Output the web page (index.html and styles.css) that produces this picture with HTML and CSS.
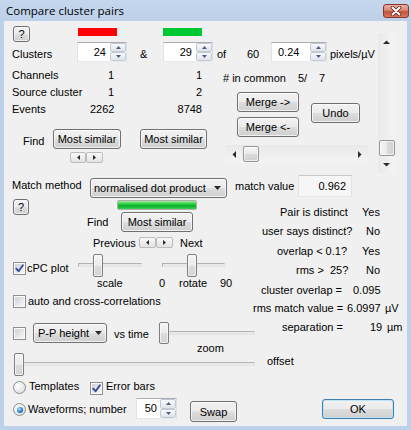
FILE: index.html
```html
<!DOCTYPE html>
<html>
<head>
<meta charset="utf-8">
<title>Compare cluster pairs</title>
<link rel="stylesheet" href="styles.css">
</head>
<body>
<div class="window">
  <div class="titlebar">
    <span class="title">Compare cluster pairs</span>
    <span class="close"><svg width="14" height="10" viewBox="0 0 14 10"><path d="M3.5 1.5L10.5 8.5M10.5 1.5L3.5 8.5" stroke="#6e2a20" stroke-width="3.6" stroke-linecap="round"/><path d="M3.5 1.5L10.5 8.5M10.5 1.5L3.5 8.5" stroke="#ffffff" stroke-width="1.9" stroke-linecap="round"/></svg></span>
  </div>
  <div class="client">
    <div class="top">
      <div class="top-main">
        <div class="row-a">
          <div class="btn help">?</div>
          <div class="bar bar-red"></div>
          <div class="bar bar-green"></div>
        </div>
        <div class="row-b">
          <span class="lbl lbl-clusters">Clusters</span>
          <div class="spin spin-cl"><span class="spin-val">24</span><span class="spin-btns"><span class="sb"><svg class="stri" width="5" height="3" viewBox="0 0 5 3"><path d="M0 3L2.5 0L5 3Z"/></svg></span><span class="sb"><svg class="stri" width="5" height="3" viewBox="0 0 5 3"><path d="M0 0L2.5 3L5 0Z"/></svg></span></span></div>
          <span class="lbl lbl-amp">&amp;</span>
          <div class="spin spin-cl"><span class="spin-val">29</span><span class="spin-btns"><span class="sb"><svg class="stri" width="5" height="3" viewBox="0 0 5 3"><path d="M0 3L2.5 0L5 3Z"/></svg></span><span class="sb"><svg class="stri" width="5" height="3" viewBox="0 0 5 3"><path d="M0 0L2.5 3L5 0Z"/></svg></span></span></div>
          <span class="lbl lbl-of">of</span>
          <span class="lbl lbl-n">60</span>
          <div class="spin spin-px"><span class="spin-val">0.24</span><span class="spin-btns"><span class="sb"><svg class="stri" width="5" height="3" viewBox="0 0 5 3"><path d="M0 3L2.5 0L5 3Z"/></svg></span><span class="sb"><svg class="stri" width="5" height="3" viewBox="0 0 5 3"><path d="M0 0L2.5 3L5 0Z"/></svg></span></span></div>
          <span class="lbl lbl-unit">pixels/µV</span>
        </div>
        <div class="lower">
          <div class="info-col">
            <div class="info-rows">
              <div class="info-row"><span>Channels</span><span class="iv">1</span><span class="iv">1</span></div>
              <div class="info-row"><span>Source cluster</span><span class="iv">1</span><span class="iv">2</span></div>
              <div class="info-row"><span>Events</span><span class="iv">2262</span><span class="iv">8748</span></div>
            </div>
            <div class="find-row">
              <span class="lbl lbl-find">Find</span>
              <div class="btn most-a">Most similar</div>
              <div class="btn most-b">Most similar</div>
            </div>
            <div class="arrows arrows-find">
              <span class="abtn abtn-l"><svg class="tri" width="3" height="5" viewBox="0 0 3 5"><path d="M3 0L0 2.5L3 5Z"/></svg></span>
              <span class="abtn"><svg class="tri" width="3" height="5" viewBox="0 0 3 5"><path d="M0 0L3 2.5L0 5Z"/></svg></span>
            </div>
          </div>
          <div class="merge-col">
            <div class="common"><span class="common-lbl"># in common</span><span class="common-a">5/</span><span>7</span></div>
            <div class="merge-row">
              <div class="merge-stack">
                <div class="btn merge">Merge -&gt;</div>
                <div class="btn merge">Merge &lt;-</div>
              </div>
              <div class="btn undo">Undo</div>
            </div>
            <div class="hscroll">
              <span class="sarrow-h"><svg class="tri" width="4" height="7" viewBox="0 0 4 7"><path d="M4 0L0.5 3.5L4 7Z"/></svg></span>
              <span class="htrack"><span class="hthumb"></span></span>
              <span class="sarrow-h"><svg class="tri" width="4" height="7" viewBox="0 0 4 7"><path d="M0 0L3.5 3.5L0 7Z"/></svg></span>
            </div>
          </div>
        </div>
      </div>
      <div class="vscroll">
        <span class="sarrow-v"><svg class="tri" width="7" height="4" viewBox="0 0 7 4"><path d="M0 4L3.5 0.5L7 4Z"/></svg></span>
        <span class="vtrack"><span class="vthumb"></span></span>
        <span class="sarrow-v"><svg class="tri" width="7" height="4" viewBox="0 0 7 4"><path d="M0 0L3.5 3.5L7 0Z"/></svg></span>
      </div>
    </div>

    <div class="match-row">
      <span class="lbl lbl-method">Match method</span>
      <div class="combo combo-method"><span>normalised dot product</span><svg class="tri" width="7" height="4" viewBox="0 0 7 4"><path d="M0 0L3.5 4L7 0Z"/></svg></div>
      <span class="lbl lbl-mv">match value</span>
      <div class="valbox">0.962</div>
    </div>

    <div class="mid">
      <div class="mid-left">
        <div class="find2-block">
          <div class="btn help help2">?</div>
          <div class="find2-col">
            <div class="progress"><div class="progress-fill"></div></div>
            <div class="find2-row">
              <span class="lbl lbl-find2">Find</span>
              <div class="btn most-c">Most similar</div>
            </div>
          </div>
        </div>
        <div class="prev-row">
          <span class="lbl lbl-prev">Previous</span>
          <div class="arrows arrows-prev">
            <span class="abtn"><svg class="tri" width="3" height="5" viewBox="0 0 3 5"><path d="M3 0L0 2.5L3 5Z"/></svg></span>
            <span class="abtn"><svg class="tri" width="3" height="5" viewBox="0 0 3 5"><path d="M0 0L3 2.5L0 5Z"/></svg></span>
          </div>
          <span class="lbl lbl-next">Next</span>
        </div>
        <div class="cpc-row">
          <div class="check-group">
            <span class="cb cb-cpc"><svg class="tick" width="9" height="9" viewBox="0 0 9 9"><path d="M1.2 4.6L3.6 7.2L7.9 1.3"/></svg></span>
            <span class="lbl lbl-cpc">cPC plot</span>
          </div>
          <div class="slider slider-scale"><div class="track"></div><div class="thumb thumb-scale"></div></div>
          <div class="slider slider-rotate"><div class="track"></div><div class="thumb thumb-rotate"></div></div>
        </div>
        <div class="scale-labels">
          <span class="sl-scale">scale</span>
          <span class="sl-zero">0</span>
          <span class="sl-rotate">rotate</span>
          <span>90</span>
        </div>
        <div class="auto-row">
          <span class="cb cb-auto"></span>
          <span class="lbl lbl-auto">auto and cross-correlations</span>
        </div>
        <div class="pp-row">
          <span class="cb cb-pp"></span>
          <div class="combo combo-pp"><span>P-P height</span><svg class="tri" width="7" height="4" viewBox="0 0 7 4"><path d="M0 0L3.5 4L7 0Z"/></svg></div>
          <span class="lbl lbl-vs">vs time</span>
          <div class="slider slider-time"><div class="track"></div><div class="thumb thumb-start"></div></div>
        </div>
      </div>
      <div class="mid-right">
        <div class="stat s1"><span class="sk k1">Pair is distinct</span><span>Yes</span></div>
        <div class="stat s2"><span class="sk k2">user says distinct?</span><span>No</span></div>
        <div class="stat s3"><span class="sk k3">overlap &lt; 0.1?</span><span>Yes</span></div>
        <div class="stat s4"><span class="sk k4">rms &gt;  25?</span><span>No</span></div>
        <div class="stat s5"><span class="sk k5">cluster overlap =</span><span>0.095</span></div>
        <div class="stat s6"><span class="sk k6">rms match value =</span><span class="sv6">6.0997</span><span>µV</span></div>
        <div class="stat s7"><span class="sk k7">separation =</span><span class="sv7">19</span><span>µm</span></div>
      </div>
    </div>

    <div class="bottom">
      <div class="zoom-row">zoom</div>
      <div class="offset-row">
        <div class="slider slider-offset"><div class="track"></div><div class="thumb thumb-start"></div></div>
        <span class="lbl lbl-offset">offset</span>
      </div>
      <div class="tmpl-row">
        <span class="radio radio-tmpl"></span>
        <span class="lbl lbl-tmpl">Templates</span>
        <span class="cb cb-err"><svg class="tick" width="9" height="9" viewBox="0 0 9 9"><path d="M1.2 4.6L3.6 7.2L7.9 1.3"/></svg></span>
        <span class="lbl lbl-err">Error bars</span>
      </div>
      <div class="wave-row">
        <span class="radio radio-wave on"></span>
        <span class="lbl lbl-wave">Waveforms; number</span>
        <div class="spin spin-num"><span class="spin-val">50</span><span class="spin-btns"><span class="sb"><svg class="stri" width="5" height="3" viewBox="0 0 5 3"><path d="M0 3L2.5 0L5 3Z"/></svg></span><span class="sb"><svg class="stri" width="5" height="3" viewBox="0 0 5 3"><path d="M0 0L2.5 3L5 0Z"/></svg></span></span></div>
        <div class="btn swap">Swap</div>
        <div class="btn default ok">OK</div>
      </div>
    </div>
  </div>
</div>
</body>
</html>
```

FILE: styles.css
```css
* { box-sizing: border-box; }
html, body { margin: 0; padding: 0; }
body {
  width: 411px;
  height: 430px;
  overflow: hidden;
  font-family: "Liberation Sans", Arial, sans-serif;
  font-size: 11px;
  color: #000;
  background: #bfd3ea;
}

/* window frame */
.window {
  width: 411px;
  height: 430px;
  background: #bdd1ea;
  display: flex;
  flex-direction: column;
}
.titlebar {
  height: 21px;
  flex: none;
  display: flex;
  align-items: center;
  justify-content: space-between;
  padding: 0 2px 0 6px;
  background: linear-gradient(#c4d7ed, #bcd0e9);
}
.title {
  font-family: "Open Sans", "Liberation Sans", sans-serif;
  font-size: 11.5px;
  line-height: 21px;
}
.close {
  width: 26px;
  height: 14px;
  margin-top: 1px;
  border: 1px solid #86382d;
  border-radius: 3px;
  background: linear-gradient(#eab0a3 0%, #d98471 45%, #c4523b 55%, #d4795f 100%);
  display: flex;
  align-items: center;
  justify-content: center;
}
.client {
  margin: 0 4px;
  width: 403px;
  height: 405px;
  background: #f0f0f0;
}

/* generic controls */
.lbl { flex: none; line-height: 14px; white-space: nowrap; }
.btn {
  flex: none;
  display: flex;
  align-items: center;
  justify-content: center;
  white-space: nowrap;
  height: 20px;
  border: 1px solid #707070;
  border-radius: 3px;
  background: linear-gradient(#f2f2f2 0%, #ebebeb 48%, #dddddd 52%, #cfcfcf 100%);
  box-shadow: inset 0 0 0 1px rgba(255, 255, 255, 0.7);
}
.btn.default {
  border-color: #3c7fb1;
  box-shadow: inset 0 0 0 1px #bfe4f7;
}
.help { width: 17px; height: 16px; font-size: 11px; }

.tri path { fill: #2b2b2b; }
.stri path { fill: #4b5e84; }

.spin {
  flex: none;
  display: flex;
  height: 20px;
  background: #fff;
  border: 1px solid;
  border-color: #abadb3 #dbdfe6 #e3e9ef #e2e3ea;
}
.spin-val { flex: 1; text-align: right; line-height: 18px; padding-right: 4px; }
.spin-btns { width: 16px; flex: none; display: flex; flex-direction: column; }
.sb {
  flex: 1;
  display: flex;
  align-items: center;
  justify-content: center;
  border: 1px solid #c4cad4;
  border-radius: 2px;
  background: linear-gradient(#f8f9fb, #e0e4ea);
}

.combo {
  flex: none;
  display: flex;
  align-items: center;
  justify-content: space-between;
  height: 20px;
  white-space: nowrap;
  border: 1px solid #707070;
  border-radius: 3px;
  background: linear-gradient(#f2f2f2 0%, #ebebeb 48%, #dddddd 52%, #cfcfcf 100%);
  box-shadow: inset 0 0 0 1px rgba(255, 255, 255, 0.7);
}

.cb {
  flex: none;
  width: 13px;
  height: 13px;
  padding: 1px;
  border: 1px solid #8e8f8f;
  background: linear-gradient(135deg, #cfd2d7, #f6f6f6) content-box, #fafafa padding-box;
}
.tick { display: block; overflow: visible; }
.tick path { fill: none; stroke: #36499a; stroke-width: 1.9; stroke-linecap: round; stroke-linejoin: round; }

.radio {
  flex: none;
  width: 13px;
  height: 13px;
  border-radius: 50%;
  border: 1px solid #8e8f8f;
  background: radial-gradient(circle at 35% 35%, #ffffff, #d3d6da);
  display: flex;
  align-items: center;
  justify-content: center;
}
.radio.on::after {
  content: "";
  width: 6px;
  height: 6px;
  border-radius: 50%;
  background: radial-gradient(circle at 40% 35%, #b2e6fc, #1b73c5 60%, #0f4a8c);
}

.slider { position: relative; flex: none; height: 23px; }
.track {
  margin-top: 9px;
  height: 4px;
  border: 1px solid;
  border-color: #b3b3b3 #e3e3e3 #e3e3e3 #b3b3b3;
  background: #e7eaea;
}
.thumb {
  position: absolute;
  top: 0;
  width: 10px;
  height: 23px;
  border: 1px solid #7e7e7e;
  border-radius: 2px;
  background: linear-gradient(#f4f4f4 0%, #ebebeb 50%, #dcdcdc 51%, #d4d4d4 100%);
  box-shadow: inset 0 0 0 1px rgba(255, 255, 255, 0.6);
}
.thumb-start { left: 0; }

.arrows { display: flex; flex: none; }
.abtn {
  width: 16px;
  height: 11px;
  display: flex;
  align-items: center;
  justify-content: center;
  border: 1px solid #bcbcbc;
  border-radius: 2px;
  background: linear-gradient(#f9f9f9, #e2e2e2);
}
.abtn + .abtn { width: 17px; }

/* top section */
.top { display: flex; height: 152px; }
.top-main { width: 374px; flex: none; }
.row-a { display: flex; align-items: flex-start; height: 21px; }
.row-a .help { margin: 5px 0 0 9px; }
.bar { width: 39px; height: 8px; margin-top: 7px; flex: none; }
.bar-red { background: #ff0000; margin-left: 48px; }
.bar-green { background: #00c832; margin-left: 46px; }

.row-b { display: flex; align-items: flex-start; height: 20px; }
.row-b .lbl { margin-top: 5px; }
.lbl-clusters { margin-left: 8px; width: 65px; }
.spin-cl { width: 50px; }
.lbl-amp { margin-left: 13px; width: 23px; }
.lbl-of { margin-left: 4px; width: 30px; }
.lbl-n { width: 24px; }
.spin-px { width: 56px; }
.spin-px .spin-val { text-align: left; padding-left: 6px; }
.lbl-unit { margin-left: 3px; }

.lower { display: flex; height: 111px; }
.info-col { width: 216px; flex: none; }
.info-rows { margin-top: 5px; }
.info-row {
  display: grid;
  grid-template-columns: 78px 24px 88px;
  height: 17px;
  line-height: 17px;
  padding-left: 8px;
  white-space: nowrap;
}
.iv { text-align: right; }
.find-row { display: flex; align-items: flex-start; margin-top: 11px; height: 20px; }
.lbl-find { margin: 5px 0 0 19px; width: 30px; }
.most-a { width: 68px; }
.most-b { width: 67px; margin-left: 19px; }
.arrows-find { margin: 3px 0 0 66px; }

.merge-col { width: 158px; flex: none; }
.common { display: flex; margin-top: 9px; height: 14px; line-height: 14px; padding-left: 3px; white-space: nowrap; }
.common-lbl { width: 75px; }
.common-a { width: 21px; }
.merge-row { display: flex; align-items: flex-start; margin: 7px 0 0 17px; height: 45px; }
.merge-stack { display: flex; flex-direction: column; gap: 5px; width: 62px; }
.merge { width: 62px; }
.undo { width: 49px; margin: 11px 0 0 12px; }

.hscroll {
  display: flex;
  margin: 8px 0 0 5px;
  width: 143px;
  height: 18px;
  background: linear-gradient(#e9e9e9, #f4f4f4);
}
.sarrow-h { width: 17px; flex: none; display: flex; align-items: center; justify-content: center; }
.htrack { flex: 1; display: flex; align-items: stretch; padding: 1px 0; }
.hthumb {
  width: 16px;
  margin-left: 1px;
  border: 1px solid #979797;
  border-radius: 2px;
  background: linear-gradient(#f5f5f5 0%, #e9e9e9 50%, #d9d9d9 51%, #d2d2d2 100%);
  box-shadow: inset 0 0 0 1px rgba(255, 255, 255, 0.6);
}

.vscroll {
  display: flex;
  flex-direction: column;
  margin-top: 12px;
  width: 17px;
  height: 140px;
  background: linear-gradient(90deg, #e9e9e9, #f4f4f4);
}
.sarrow-v { height: 17px; flex: none; display: flex; align-items: center; justify-content: center; }
.vtrack { flex: 1; display: flex; flex-direction: column; justify-content: flex-end; padding: 0 0 0 1px; }
.vthumb {
  height: 16px;
  border: 1px solid #979797;
  border-radius: 2px;
  background: linear-gradient(90deg, #f5f5f5 0%, #e9e9e9 50%, #d9d9d9 51%, #d2d2d2 100%);
  box-shadow: inset 0 0 0 1px rgba(255, 255, 255, 0.6);
}

/* match method row */
.match-row { display: flex; align-items: flex-start; height: 25px; }
.lbl-method { margin: 5px 0 0 8px; width: 78px; }
.combo-method { margin-top: 5px; width: 137px; padding: 0 5px 0 3px; }
.lbl-mv { margin: 6px 0 0 8px; width: 63px; }
.valbox {
  flex: none;
  margin-top: 2px;
  width: 54px;
  height: 22px;
  line-height: 20px;
  text-align: right;
  padding-right: 5px;
  border: 1px solid;
  border-color: #c5c8cd #e0e3e8 #e6eaee #e0e3e8;
  background: #f6f6f6;
}

/* middle section */
.mid { display: flex; height: 146px; }
.mid-left { width: 246px; flex: none; }
.find2-block { display: flex; align-items: flex-start; height: 34px; }
.help2 { margin: 1px 0 0 9px; width: 16px; }
.find2-col { margin-left: 58px; }
.progress {
  margin: 2px 0 0 30px;
  width: 80px;
  height: 10px;
  border: 1px solid #aeaeae;
  border-radius: 2px;
  background: #e6e6e6;
}
.progress-fill {
  height: 100%;
  background: linear-gradient(#9ee99e 0%, #37cf48 35%, #06b025 60%, #3fd055 100%);
}
.find2-row { display: flex; align-items: flex-start; margin-top: 2px; height: 20px; }
.lbl-find2 { margin-top: 3px; width: 34px; }
.most-c { width: 72px; }

.prev-row { display: flex; align-items: flex-start; margin-top: 4px; height: 14px; }
.lbl-prev { margin-left: 89px; width: 46px; }
.arrows-prev { margin-top: 1px; }
.arrows-prev .abtn { width: 17px; }
.lbl-next { margin-left: 7px; }

.cpc-row { display: flex; align-items: flex-start; margin-top: 4px; height: 23px; }
.check-group { display: flex; align-items: flex-start; width: 74px; flex: none; }
.cb-cpc { margin: 8px 0 0 9px; }
.lbl-cpc { margin: 7px 0 0 1px; }
.slider-scale { width: 64px; }
.thumb-scale { left: 15px; }
.slider-rotate { width: 63px; margin-left: 20px; }
.thumb-rotate { left: 25px; }

.scale-labels { display: flex; height: 12px; line-height: 12px; white-space: nowrap; }
.sl-scale { margin-left: 93px; width: 62px; }
.sl-zero { width: 20px; }
.sl-rotate { width: 41px; }

.auto-row { display: flex; align-items: flex-start; margin-top: 6px; height: 13px; }
.cb-auto { margin-left: 9px; }
.lbl-auto { margin-left: 2px; line-height: 13px; }

.pp-row { display: flex; align-items: flex-start; margin-top: 14px; height: 22px; }
.cb-pp { margin: 5px 0 0 9px; }
.combo-pp { margin: 1px 0 0 7px; width: 74px; padding: 0 4px 0 4px; }
.lbl-vs { margin: 5px 0 0 7px; width: 45px; }
.slider-time { width: 96px; height: 22px; }
.slider-time .thumb { height: 22px; }

.mid-right { flex: 1; }
.stat { display: flex; height: 14px; line-height: 14px; white-space: pre; }
.sk { flex: none; }
.s1 { margin-top: 7px; padding-left: 30px; }
.k1 { width: 82px; }
.s2 { margin-top: 5px; padding-left: 12px; }
.k2 { width: 104px; }
.s3 { margin-top: 6px; padding-left: 27px; }
.k3 { width: 85px; }
.s4 { margin-top: 5px; padding-left: 46px; }
.k4 { width: 70px; }
.s5 { margin-top: 6px; padding-left: 11px; }
.k5 { width: 92px; }
.s6 { margin-top: 4px; padding-left: 3px; }
.k6 { width: 94px; }
.sv6 { width: 38px; }
.s7 { margin-top: 5px; padding-left: 32px; }
.k7 { width: 88px; }
.sv7 { width: 17px; }

/* bottom section */
.zoom-row { height: 8px; line-height: 8px; padding-left: 193px; }
.offset-row { display: flex; align-items: flex-start; margin-top: 1px; height: 23px; }
.slider-offset { width: 241px; margin-left: 10px; }
.lbl-offset { margin: 1px 0 0 12px; }

.tmpl-row { display: flex; align-items: flex-start; margin-top: 3px; height: 14px; }
.radio-tmpl { margin: 2px 0 0 9px; }
.lbl-tmpl { margin-left: 3px; width: 61px; }
.cb-err { margin-top: 3px; }
.lbl-err { margin-left: 3px; }

.wave-row { display: flex; align-items: flex-start; margin-top: 5px; height: 24px; }
.radio-wave { margin: 5px 0 0 9px; }
.lbl-wave { margin: 4px 0 0 2px; width: 108px; }
.spin-num { width: 41px; height: 21px; }
.spin-num .spin-val { line-height: 19px; padding-right: 3px; }
.swap { margin: 3px 0 0 13px; width: 47px; height: 21px; }
.ok { margin: 1px 0 0 85px; width: 72px; height: 20px; }
```
